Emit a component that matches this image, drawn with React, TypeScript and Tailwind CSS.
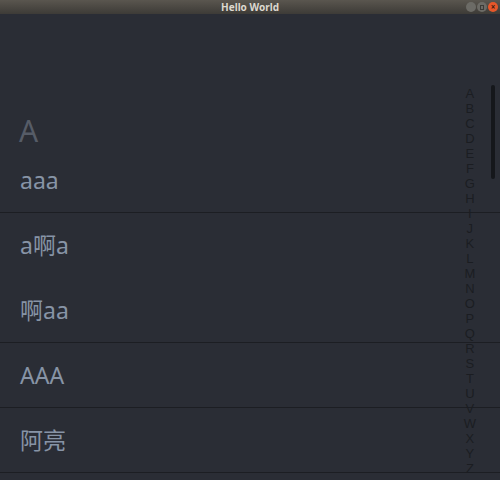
import React from "react";

const letters = "ABCDEFGHIJKLMNOPQRSTUVWXYZ".split("");

type Row = { text: string; border: boolean };
const rows: Row[] = [
  { text: "aaa", border: true },
  { text: "a啊a", border: false },
  { text: "啊aa", border: true },
  { text: "AAA", border: true },
  { text: "阿亮", border: true },
  { text: "", border: false },
];

export default function App() {
  return (
    <div
      className="w-[500px] h-[480px] overflow-hidden flex flex-col bg-[#2a2d35]"
      style={{ fontFamily: '"Noto Sans", "Noto Sans CJK SC", sans-serif' }}
    >
      <div className="h-[14px] shrink-0 relative flex items-center justify-center bg-gradient-to-b from-[#5a564f] to-[#3d3b37]">
        <span className="text-[10px] font-bold text-[#dcd8cf] leading-none">Hello World</span>
        <div className="absolute right-[2px] top-[2px] flex gap-[1px]">
          <div className="w-[10px] h-[10px] rounded-full bg-[#6c6b66]" />
          <div className="w-[10px] h-[10px] rounded-full bg-[#6c6b66] flex items-center justify-center">
            <div className="w-[4px] h-[5px] border border-[#3c3b37]" />
          </div>
          <div className="w-[10px] h-[10px] rounded-full bg-[#e6572a] flex items-center justify-center text-[8px] leading-none text-[#3c1a0e] font-bold">
            ×
          </div>
        </div>
      </div>
      <div className="relative flex-1">
        <div className="h-[86px]" />
        <div className="h-[48px] flex items-end pl-[19px]">
          <span className="text-[30px] leading-none text-[#565c67] pb-[2px]">A</span>
        </div>
        {rows.map((r, i) => (
          <div
            key={i}
            className={`h-[65px] flex items-center pl-[20px] ${r.border ? "border-b border-[#1c1e23]" : ""}`}
          >
            <span className="text-[23px] text-[#8794a6] leading-none">{r.text}</span>
          </div>
        ))}
        <div
          className="absolute right-[24px] top-[72px] flex flex-col items-center"
          style={{ fontFamily: '"Liberation Sans", sans-serif' }}
        >
          {letters.map((l) => (
            <span key={l} className="block h-[15px] text-[13px] leading-[15px] text-[#1b1d22]">
              {l}
            </span>
          ))}
        </div>
        <div className="absolute right-[5px] top-[71px] w-[4px] h-[94px] rounded-full bg-[#15171b]" />
      </div>
    </div>
  );
}
